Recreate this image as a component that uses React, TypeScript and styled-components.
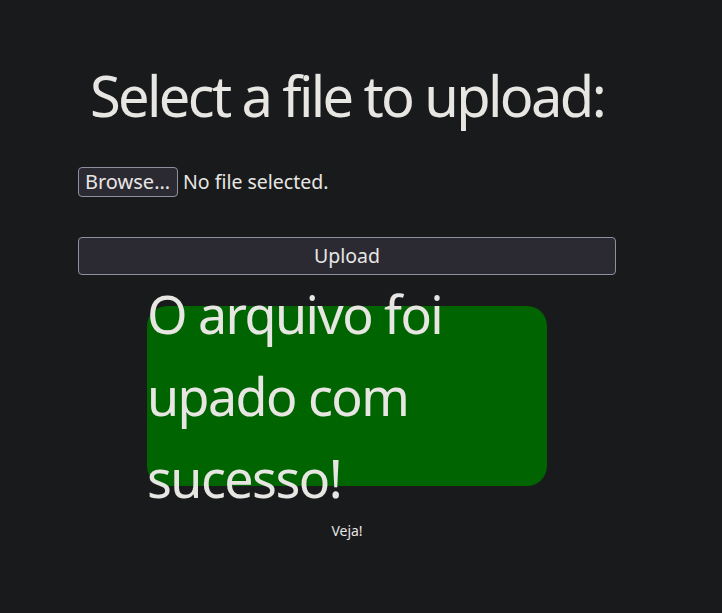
import styled, { createGlobalStyle } from "styled-components";

const GlobalStyle = createGlobalStyle`
  html, body {
    margin: 0;
    padding: 0;
    background-color: #181a1b;
    color: #e8e6e3;
    font-family: "Noto Sans", "Open Sans", sans-serif;
  }
`;

const Page = styled.div`
  min-height: 613px;
  padding: 57px 0 0 78px;
  box-sizing: border-box;
`;

const Column = styled.div`
  width: 538px;
  display: flex;
  flex-direction: column;
  align-items: center;
`;

const Title = styled.h1`
  margin: 0;
  font-size: 56px;
  font-weight: 400;
  line-height: 76px;
  letter-spacing: -0.047em;
  text-align: center;
`;

const FileRow = styled.div`
  align-self: stretch;
  display: flex;
  align-items: center;
  gap: 5px;
  margin-top: 34px;
`;

const NativeButton = styled.button<{ $wide?: boolean }>`
  font-family: inherit;
  font-size: ${({ $wide }) => ($wide ? "19.5px" : "20px")};
  line-height: 26px;
  color: #e8e6e3;
  background-color: #2b2a33;
  border: 1px solid #8f8f9d;
  border-radius: 4px;
  padding: ${({ $wide }) => ($wide ? "5px 8px 5px" : "1px 7px 1px 6px")};
  width: ${({ $wide }) => ($wide ? "100%" : "auto")};
  cursor: pointer;
`;

const FileName = styled.span`
  font-size: 19.5px;
  line-height: 26px;
`;

const UploadWrap = styled.div`
  align-self: stretch;
  margin-top: 40px;
`;

const SuccessBox = styled.div`
  margin-top: 31px;
  width: 400px;
  height: 180px;
  background-color: #006400;
  border-radius: 20px;
  display: flex;
  align-items: center;
`;

const SuccessText = styled.p`
  margin: 0;
  font-size: 52px;
  line-height: 82px;
  letter-spacing: -0.03em;
`;

const Note = styled.span`
  margin-top: 35px;
  font-size: 14px;
  line-height: 19px;
`;

export default function App() {
  return (
    <>
      <GlobalStyle />
      <Page>
        <Column>
          <Title>Select a file to upload:</Title>
          <FileRow>
            <NativeButton>Browse…</NativeButton>
            <FileName>No file selected.</FileName>
          </FileRow>
          <UploadWrap>
            <NativeButton $wide>Upload</NativeButton>
          </UploadWrap>
          <SuccessBox>
            <SuccessText>O arquivo foi upado com sucesso!</SuccessText>
          </SuccessBox>
          <Note>Veja!</Note>
        </Column>
      </Page>
    </>
  );
}
